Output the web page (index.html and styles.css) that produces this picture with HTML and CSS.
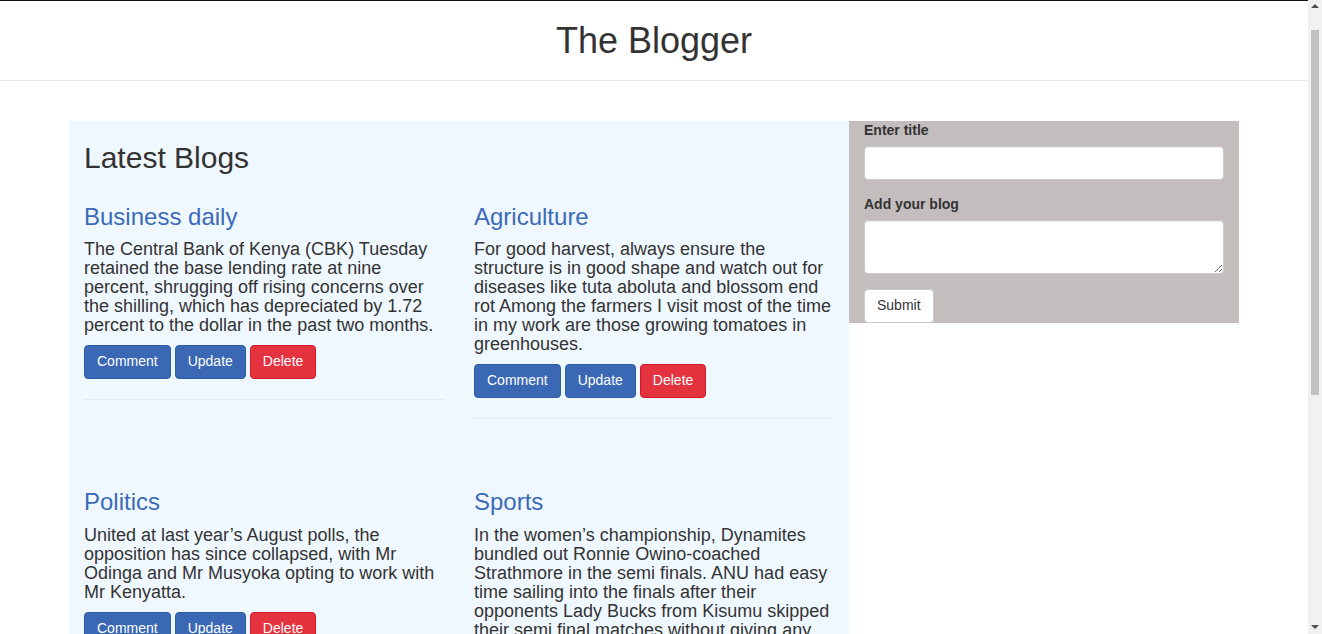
FILE: index.html
```html
<!DOCTYPE html>
<html lang="en">
<head>
<meta charset="utf-8">
<title>The Blogger</title>
<link rel="stylesheet" href="styles.css">
</head>
<body>
<header class="site-header">
  <h1 class="site-title">The Blogger</h1>
</header>
<main class="container">
  <section class="blogs">
    <h2 class="blogs-title">Latest Blogs</h2>
    <div class="blog-grid">
      <article class="blog">
        <h3 class="blog-title">Business daily</h3>
        <p class="blog-text">The Central Bank of Kenya (CBK) Tuesday retained the base lending rate at nine percent, shrugging off rising concerns over the shilling, which has depreciated by 1.72 percent to the dollar in the past two months.</p>
        <div class="actions">
          <button class="btn btn-primary">Comment</button>
          <button class="btn btn-primary">Update</button>
          <button class="btn btn-danger">Delete</button>
        </div>
        <hr class="sep">
      </article>
      <article class="blog">
        <h3 class="blog-title">Agriculture</h3>
        <p class="blog-text">For good harvest, always ensure the structure is in good shape and watch out for diseases like tuta aboluta and blossom end rot Among the farmers I visit most of the time in my work are those growing tomatoes in greenhouses.</p>
        <div class="actions">
          <button class="btn btn-primary">Comment</button>
          <button class="btn btn-primary">Update</button>
          <button class="btn btn-danger">Delete</button>
        </div>
        <hr class="sep">
      </article>
      <article class="blog">
        <h3 class="blog-title">Politics</h3>
        <p class="blog-text">United at last year’s August polls, the opposition has since collapsed, with Mr Odinga and Mr Musyoka opting to work with Mr Kenyatta.</p>
        <div class="actions">
          <button class="btn btn-primary">Comment</button>
          <button class="btn btn-primary">Update</button>
          <button class="btn btn-danger">Delete</button>
        </div>
        <hr class="sep">
      </article>
      <article class="blog">
        <h3 class="blog-title">Sports</h3>
        <p class="blog-text">In the women’s championship, Dynamites bundled out Ronnie Owino-coached Strathmore in the semi finals. ANU had easy time sailing into the finals after their opponents Lady Bucks from Kisumu skipped their semi final matches without giving any reason.</p>
        <div class="actions">
          <button class="btn btn-primary">Comment</button>
          <button class="btn btn-primary">Update</button>
          <button class="btn btn-danger">Delete</button>
        </div>
        <hr class="sep">
      </article>
    </div>
  </section>
  <aside class="sidebar">
    <form class="blog-form">
      <div class="form-group">
        <label class="form-label" for="title">Enter title</label>
        <input class="form-control" id="title" type="text">
      </div>
      <div class="form-group">
        <label class="form-label" for="body">Add your blog</label>
        <textarea class="form-control form-textarea" id="body" rows="2"></textarea>
      </div>
      <button class="btn btn-default" type="button">Submit</button>
    </form>
  </aside>
</main>
<div class="scrollbar" aria-hidden="true">
  <span class="sb-arrow sb-up"></span>
  <span class="sb-thumb"></span>
  <span class="sb-fill"></span>
  <span class="sb-arrow sb-down"></span>
</div>
</body>
</html>
```

FILE: styles.css
```css
* { box-sizing: border-box; }

html, body {
  margin: 0;
  padding: 0;
}

html::-webkit-scrollbar { display: none; }

body {
  margin-right: 14px;
  font-family: "Liberation Sans", Arial, Helvetica, sans-serif;
  font-size: 14px;
  line-height: 1.42857;
  color: #333;
  background: #fff;
  border-top: 1px solid #111;
}

.site-header {
  height: 80px;
  border-bottom: 1px solid #e7e7e7;
  display: flex;
  justify-content: center;
}

.site-title {
  margin: 20px 0 0;
  font-size: 36px;
  font-weight: 500;
  line-height: 1.1;
  color: #333;
}

.container {
  width: 1170px;
  margin: 40px auto 0;
  display: flex;
  align-items: flex-start;
  padding-bottom: 280px;
}

.blogs {
  width: 780px;
  background: #f0f8ff;
  padding: 20px 15px 0;
}

.blogs-title {
  margin: 0 0 10px;
  font-size: 30px;
  font-weight: 500;
  line-height: 1.1;
}

.blog-grid {
  display: grid;
  grid-template-columns: 1fr 1fr;
  margin: 0 -15px;
}

.blog {
  padding: 20px 15px 30px;
}

.blog-title {
  margin: 0 0 10px;
  font-size: 24px;
  font-weight: 500;
  line-height: 1.1;
  color: #3c6ab8;
}

.blog-text {
  margin: 0 0 10px;
  font-size: 18px;
  line-height: 19px;
}

.actions {
  display: flex;
  gap: 4px;
}

.btn {
  display: inline-block;
  font-family: inherit;
  font-size: 14px;
  line-height: 1.42857;
  padding: 6px 12px;
  border: 1px solid transparent;
  border-radius: 4px;
  cursor: pointer;
}

.btn-primary {
  color: #fff;
  background: #3a68b5;
  border-color: #2f5ca6;
}

.btn-danger {
  color: #fff;
  background: #e4333f;
  border-color: #d4182a;
}

.btn-default {
  color: #333;
  background: #fff;
  border-color: #ccc;
}

.sep {
  margin: 20px 0;
  border: 0;
  border-top: 1px solid #e6ebef;
  height: 0;
}

.sidebar {
  width: 390px;
  background: #c3bdbd;
  padding: 0 15px;
}

.form-group {
  margin-bottom: 15px;
}

.form-label {
  display: inline-block;
  margin-bottom: 5px;
  font-weight: 700;
  max-width: 100%;
}

.form-control {
  display: block;
  width: 100%;
  height: 34px;
  padding: 6px 12px;
  font-family: inherit;
  font-size: 14px;
  line-height: 1.42857;
  color: #555;
  background: #fff;
  border: 1px solid #ccc;
  border-radius: 4px;
  box-shadow: inset 0 1px 1px rgba(0,0,0,.075);
}

.form-textarea {
  height: auto;
  resize: vertical;
}

/* decorative browser scrollbar overlay */
.scrollbar {
  position: fixed;
  top: 0;
  right: 0;
  width: 14px;
  height: 100vh;
  background: #f1f1f1;
  display: flex;
  flex-direction: column;
  align-items: center;
}

.sb-arrow {
  width: 0;
  height: 0;
  border-left: 4px solid transparent;
  border-right: 4px solid transparent;
}

.sb-up {
  margin-top: 4px;
  border-bottom: 4px solid #505050;
}

.sb-down {
  margin-bottom: 5px;
  border-top: 4px solid #505050;
}

.sb-thumb {
  margin-top: 22px;
  width: 8px;
  height: 365px;
  background: #c1c1c1;
}

.sb-fill {
  flex: 1;
}
```
